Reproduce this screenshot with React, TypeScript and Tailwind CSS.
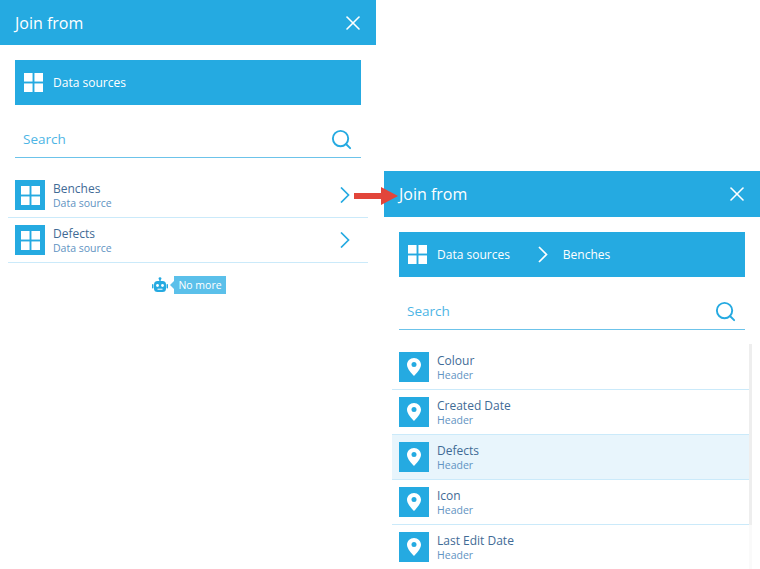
import { Search, X } from "lucide-react";

function GridIcon({ className }: { className: string }) {
  return (
    <svg viewBox="0 0 20 20" className={className} fill="white">
      <rect x="0" y="0" width="9" height="9" />
      <rect x="11" y="0" width="9" height="9" />
      <rect x="0" y="11" width="9" height="9" />
      <rect x="11" y="11" width="9" height="9" />
    </svg>
  );
}

function PinIcon() {
  return (
    <svg viewBox="0 0 14 18" className="w-[14px] h-[18px]">
      <path d="M7 0C3.1 0 0 3 0 6.8c0 4 4.8 8.9 7 11.2 2.2-2.3 7-7.2 7-11.2C14 3 10.900 0 7 0z" fill="white" />
      <circle cx="7" cy="6.6" r="2.5" fill="#25aae1" />
    </svg>
  );
}

function RobotIcon() {
  return (
    <svg viewBox="0 0 16 16" className="w-4 h-4" fill="#25aae1">
      <circle cx="8" cy="1.6" r="1.4" />
      <rect x="7.300" y="2" width="1.4" height="2.5" />
      <rect x="2" y="4" width="12" height="11" rx="3.5" />
      <rect x="0" y="7" width="1.5" height="4.5" rx="0.7" />
      <rect x="14.500" y="7" width="1.5" height="4.5" rx="0.7" />
      <circle cx="5.500" cy="8.500" r="1.4" fill="white" />
      <circle cx="10.500" cy="8.500" r="1.4" fill="white" />
      <rect x="5.500" y="11.700" width="5" height="1" fill="white" />
    </svg>
  );
}

function Chevron({ className }: { className: string }) {
  return (
    <svg viewBox="0 0 10 16" className={className} fill="none" stroke="currentColor" strokeWidth="1.7">
      <path d="M1 0.5 8.500 8 1 15.500" />
    </svg>
  );
}

function Row({ title, sub, pin, chevron, active, last }: { title: string; sub: string; pin?: boolean; chevron?: boolean; active?: boolean; last?: boolean }) {
  return (
    <div className={`h-[45px] shrink-0 flex items-center pl-[7px] pr-[18px] border-b border-[#cbeafa] ${active ? "bg-[#e8f5fc]" : ""} ${last ? "border-transparent" : ""}`}>
      <div className="w-[30px] h-[30px] shrink-0 bg-[#25aae1] flex items-center justify-center">
        {pin ? <PinIcon /> : <GridIcon className="w-[19px] h-[19px]" />}
      </div>
      <div className="ml-2 flex-1">
        <div className="text-[12px] leading-[15px] text-[#3f6b96]">{title}</div>
        <div className="text-[10.5px] leading-[14px] text-[#5f93c2]">{sub}</div>
      </div>
      {chevron && <Chevron className="w-[10px] h-[16px] text-[#25aae1]" />}
    </div>
  );
}

function Panel({ crumbs, tall, children }: { crumbs: string[]; tall?: boolean; children: React.ReactNode }) {
  return (
    <div className="w-[376px] shrink-0">
      <div className={`${tall ? "h-[46px]" : "h-[45px]"} bg-[#25aae1] flex items-center justify-between pl-[15px] pr-[11px] text-white`}>
        <span className="text-[16px]">Join from</span>
        <X className="w-[24px] h-[24px]" strokeWidth={1.6} />
      </div>
      <div className="mx-[15px] mt-[15px] h-[45px] bg-[#25aae1] flex items-center pl-[9px] text-white text-[12px]">
        <GridIcon className="w-[19px] h-[19px] mr-[10px]" />
        <span>{crumbs[0]}</span>
        {crumbs[1] && (
          <>
            <Chevron className="w-[10px] h-[17px] ml-[28px] mr-[15px]" />
            <span>{crumbs[1]}</span>
          </>
        )}
      </div>
      <div className="mx-[15px] mt-[15px] h-[38px] border-b border-[#6cc3ea] flex items-center justify-between pl-2 pr-[8px]">
        <span className="text-[13.5px] text-[#4db5e5] pt-[2px]">Search</span>
        <Search className="w-[23px] h-[23px] text-[#25aae1] mt-[1px]" strokeWidth={2} />
      </div>
      <div className="mt-[15px] mx-2">{children}</div>
    </div>
  );
}

export default function App() {
  return (
    <div className="relative w-[760px] h-[569px] overflow-hidden bg-white flex gap-2 font-['Open_Sans',sans-serif]">
      <Panel crumbs={["Data sources"]}>
        <Row title="Benches" sub="Data source" chevron />
        <Row title="Defects" sub="Data source" chevron />
        <div className="mt-[13px] ml-[2px] flex items-center justify-center gap-[6px]">
          <RobotIcon />
          <div className="relative w-[52px] h-[18px] bg-[#5bc0ea] text-white text-[10.5px] leading-[18px] text-center">
            <span className="absolute -left-1 top-[5px] border-y-4 border-r-4 border-y-transparent border-r-[#5bc0ea]" />
            No more
          </div>
        </div>
      </Panel>
      <div className="mt-[171px]">
        <Panel crumbs={["Data sources", "Benches"]} tall>
          <div className="relative">
            <Row title="Colour" sub="Header" pin />
            <Row title="Created Date" sub="Header" pin />
            <Row title="Defects" sub="Header" pin active />
            <Row title="Icon" sub="Header" pin />
            <Row title="Last Edit Date" sub="Header" pin last />
            <div className="absolute right-0 -top-[1px] w-[3px] h-[230px] bg-[#fafafa]" />
            <div className="absolute right-0 -top-[1px] w-[3px] h-[181px] bg-[#eeeeee]" />
          </div>
        </Panel>
      </div>
      {/* red arrow between the two panels */}
      <svg viewBox="0 0 44 18" className="absolute left-[354px] top-[187px] w-[44px] h-[18px]">
        <path d="M0 6h27V0l17 9-17 9v-6H0z" fill="#e2453a" />
      </svg>
    </div>
  );
}
